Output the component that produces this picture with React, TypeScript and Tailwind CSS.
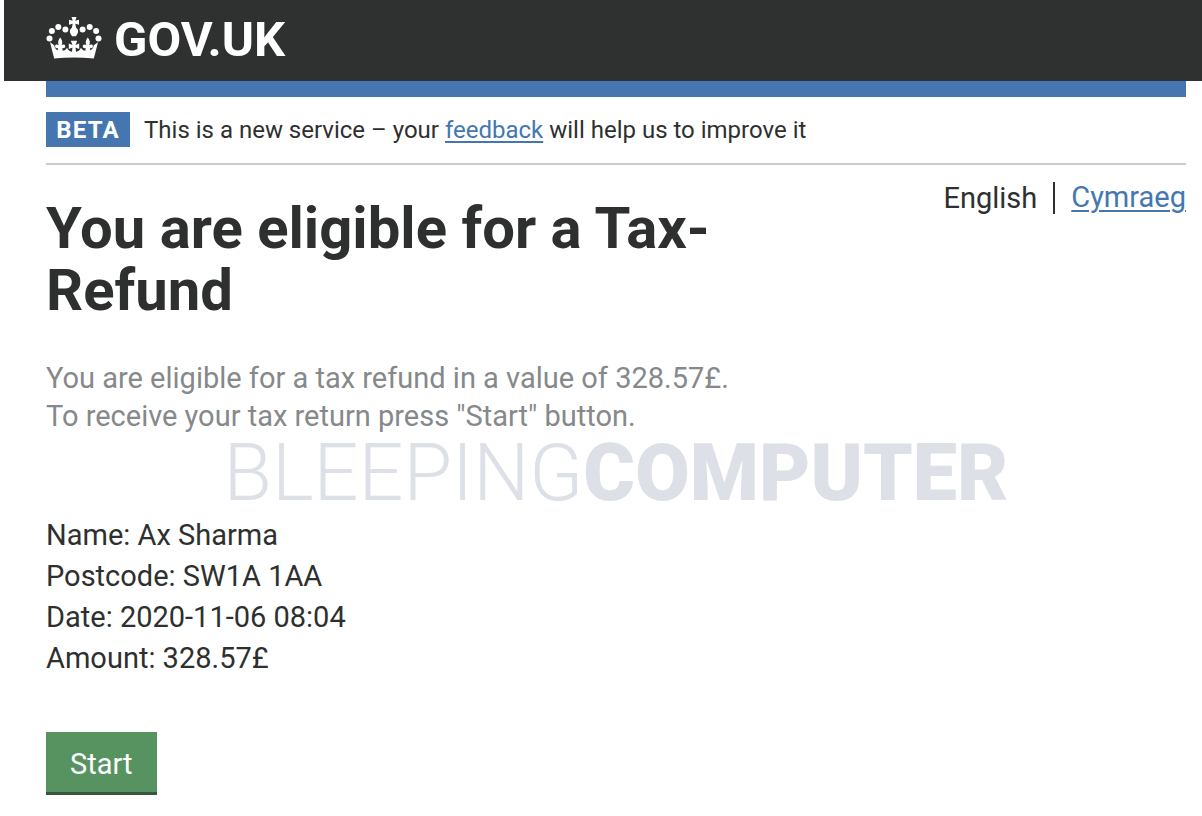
import type { ReactNode } from 'react'

const details = [
  { label: 'Name', value: 'Ax Sharma' },
  { label: 'Postcode', value: 'SW1A 1AA' },
  { label: 'Date', value: '2020-11-06 08:04' },
  { label: 'Amount', value: '328.57£' },
]

function Crown() {
  return (
    <svg viewBox="0 0 56 42" className="mb-1 h-[42px] w-[56px]" fill="currentColor" aria-hidden="true">
      {/* Pearls on the two arches */}
      <circle cx="3.5" cy="21.6" r="3" />
      <circle cx="5.9" cy="14" r="3" />
      <circle cx="12.3" cy="10" r="3" />
      <circle cx="19.4" cy="12.600" r="3" />
      <circle cx="36.600" cy="12.600" r="3" />
      <circle cx="43.700" cy="10" r="3" />
      <circle cx="50.100" cy="14" r="3" />
      <circle cx="52.500" cy="21.600" r="3" />
      {/* Top cross and orb */}
      <path d="M25.500 0h5l-1.200 3.700 3.700-1v5l-3.700-1 .8 4c1.300.8 2 2.200 2 3.700 0 1.800-1.300 3.200-2.300 4.800h-3.600c-1-1.600-2.300-3-2.300-4.800 0-1.500.7-2.900 2-3.700l.8-4-3.700 1v-5l3.700 1z" />
      {/* Centre cross */}
      <path d="M24.800 23.800h6.400l-1.700 4.200 3.700-1.400v5.400l-3.700-1.400.9 6.400h-4.800l.9-6.400-3.700 1.400v-5.400l3.700 1.400z" />
      {/* Side fleurs */}
      <path d="M14.200 20.400c2.200 2.800 2.600 5 1.400 7.900 1.400-1.100 3.100-.9 3.600.5.500 1.500-.9 2.800-2.900 2.300l.9 6h-6l.8-6c-2 .5-3.400-.8-2.900-2.300.5-1.400 2.300-1.600 3.700-.5-1.200-2.900-.8-5.100 1.400-7.900z" />
      <path d="M41.800 20.400c-2.200 2.800-2.600 5-1.400 7.900-1.400-1.100-3.100-.9-3.600.5-.5 1.500.9 2.800 2.900 2.300l-.9 6h6l-.8-6c2 .5 3.400-.8 2.900-2.300-.5-1.400-2.300-1.600-3.700-.5 1.200-2.900.8-5.100-1.400-7.900z" />
      {/* Band with curled upper edge */}
      <path d="M4 25.300l4.200 3c.5 3.400 2.400 5.300 5.400 5.700 3.600.3 6.200-.5 7.400-3.200 1.300 3.200 3.500 4.200 7 4.200s5.700-1 7-4.200c1.200 2.700 3.800 3.500 7.400 3.200 3-.4 4.900-2.300 5.400-5.700l4.200-3L47.800 41.500c-13-1.500-26.600-1.500-39.600 0z" />
    </svg>
  )
}

function TextLink({ children }: { children: ReactNode }) {
  return (
    <a href="#" className="text-[#4477b0] underline decoration-2 underline-offset-3">
      {children}
    </a>
  )
}

export default function App() {
  return (
    <div className="relative min-h-screen bg-white font-['Roboto','Liberation_Sans',sans-serif] text-[#2e3030]">
      <header className="ml-1 bg-[#2f3130] pr-4 pl-[42px] text-white">
        <a href="#" className="flex h-[81px] w-fit items-center gap-3 pb-0.5">
          <Crown />
          <span className="text-[49px] font-bold">GOV.UK</span>
        </a>
      </header>

      <div className="mr-4 ml-[46px]">
        <div className="h-4 bg-[#4676b0]" />

        <div className="flex items-center gap-3.5 border-b-2 border-[#c9cacb] pt-[15px] pb-4">
          <strong className="min-w-21 bg-[#4676b0] px-2 pt-0.5 text-center text-2xl leading-[33px] font-bold tracking-wider text-white">
            BETA
          </strong>
          <p className="pt-0.5 text-2xl leading-[33px]">
            This is a new service – your <TextLink>feedback</TextLink> will help us to improve it
          </p>
        </div>

        <main className="flex items-start justify-between">
          <div className="max-w-[720px] pt-8">
            <h1 className="text-[58px] leading-[62px] font-bold">You are eligible for a Tax-Refund</h1>

            <p className="mt-[38px] text-[29px] leading-[38px] text-[#85898b]">
              You are eligible for a tax refund in a value of 328.57£.
              <br />
              To receive your tax return press "Start" button.
            </p>

            <ul className="mt-20 text-[29px] leading-[41px]">
              {details.map((item) => (
                <li key={item.label}>
                  {item.label}: {item.value}
                </li>
              ))}
            </ul>

            <button
              type="button"
              className="mt-[53px] border-b-3 border-[#37553f] bg-[#569360] px-6 pt-1 text-[29px] leading-[56px] text-white"
            >
              Start
            </button>
          </div>

          <nav aria-label="Language" className="flex items-center pt-3 text-[29px] leading-[41px]">
            <span className="mr-4 border-r-2 border-[#2e3030] pr-4 leading-8">English</span>
            <TextLink>Cymraeg</TextLink>
          </nav>
        </main>
      </div>

      {/* Watermark across the page */}
      <div
        aria-hidden="true"
        className="pointer-events-none absolute inset-x-0 top-[434px] pl-[30px] text-center text-[79px] leading-[79px] text-[#dde0e7]"
      >
        <span className="font-light">BLEEPING</span>
        <span className="font-black">COMPUTER</span>
      </div>
    </div>
  )
}
